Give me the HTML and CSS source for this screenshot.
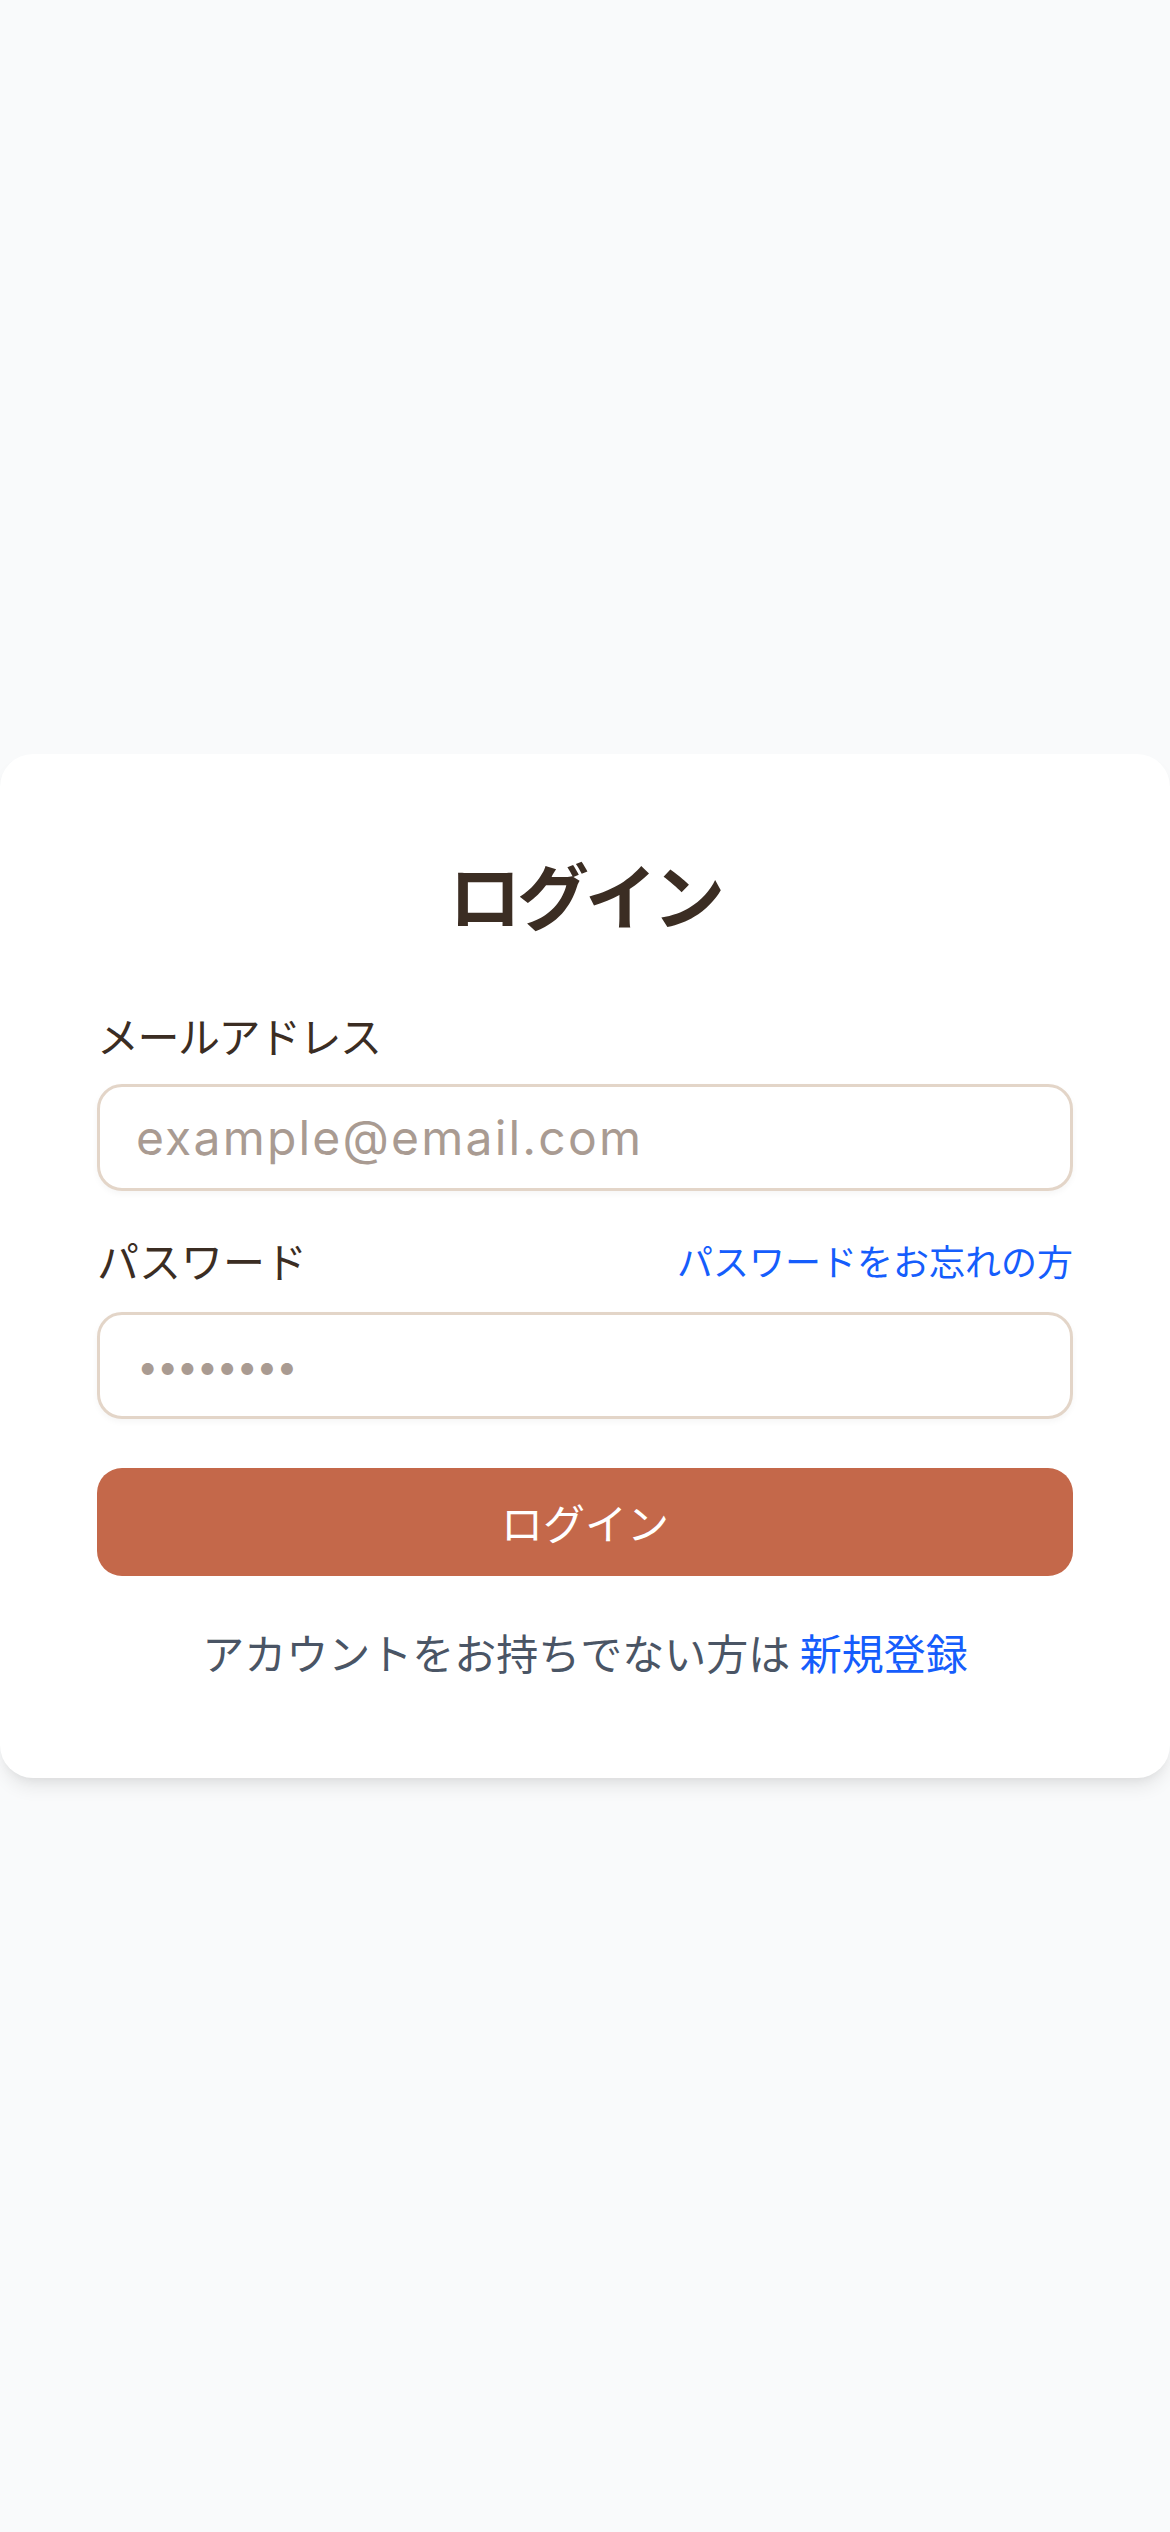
FILE: index.html
```html
<!DOCTYPE html>
<html lang="ja">
<head>
<meta charset="utf-8">
<title>ログイン</title>
<link rel="stylesheet" href="styles.css">
</head>
<body>
<main class="page">
  <section class="card">
    <h1 class="title">ログイン</h1>
    <form class="form">
      <label class="label label-email" for="email">メールアドレス</label>
      <input class="field" id="email" type="email" placeholder="example@email.com">
      <div class="row">
        <label class="label" for="password">パスワード</label>
        <a class="forgot" href="#">パスワードをお忘れの方</a>
      </div>
      <input class="field field-pass" id="password" type="password" placeholder="••••••••">
      <button class="submit" type="button">ログイン</button>
    </form>
    <p class="footer">アカウントをお持ちでない方は <a class="signup" href="#">新規登録</a></p>
  </section>
</main>
</body>
</html>
```

FILE: styles.css
```css
* { box-sizing: border-box; }
html, body { margin: 0; padding: 0; }
body {
  background: #f9fafb;
  font-family: "Inter", "Noto Sans CJK JP", sans-serif;
  color: #3b2d23;
}
.page {
  min-height: 2532px;
  display: flex;
  align-items: center;
  justify-content: center;
}
.card {
  width: 1170px;
  background: #ffffff;
  border-radius: 33px;
  padding: 91px 97px 96px 97px;
  box-shadow: 0 12px 18px -3px rgba(0,0,0,0.08), 0 6px 12px -6px rgba(0,0,0,0.08);
}
.title {
  margin: 0 0 64px 0;
  font-size: 72px;
  line-height: 96px;
  font-weight: 700;
  text-align: center;
  letter-spacing: -4px;
  color: #3b2d23;
  font-family: "Noto Sans CJK JP", sans-serif;
}
.form { display: flex; flex-direction: column; }
.label {
  display: block;
  font-size: 42px;
  line-height: 60px;
  color: #3b2d23;
  font-family: "Noto Sans CJK JP", sans-serif;
}
.label-email { margin-bottom: 19px; letter-spacing: -1.5px; }
.field {
  display: block;
  width: 100%;
  height: 107px;
  border: 3px solid #e3d5c8;
  border-radius: 25px;
  padding: 0 36px;
  font-family: "Inter", sans-serif;
  font-size: 48px;
  color: #3b2d23;
  background: #fff;
  outline: none;
  box-shadow: 0 3px 6px rgba(0,0,0,0.04);
}
.field::placeholder {
  color: #a99b92;
  letter-spacing: 2.2px;
}
.field-pass {
  font-size: 38px;
  padding-left: 37px;
}
.field-pass::placeholder {
  letter-spacing: -1.5px;
}
.row {
  margin-top: 39px;
  margin-bottom: 22px;
  display: flex;
  align-items: center;
  justify-content: space-between;
  height: 60px;
}
.forgot {
  font-size: 36px;
  line-height: 48px;
  color: #155dfc;
  text-decoration: none;
  font-family: "Noto Sans CJK JP", sans-serif;
}
.submit {
  margin-top: 49px;
  width: 100%;
  height: 108px;
  border: none;
  border-radius: 25px;
  background: #c4684a;
  color: #ffffff;
  font-family: "Noto Sans CJK JP", sans-serif;
  font-size: 42px;
  line-height: 60px;
}
.footer {
  margin: 46px 0 0 0;
  text-align: center;
  font-size: 42px;
  line-height: 60px;
  color: #4a5565;
  font-family: "Noto Sans CJK JP", sans-serif;
}
.signup {
  color: #155dfc;
  text-decoration: none;
}
```
